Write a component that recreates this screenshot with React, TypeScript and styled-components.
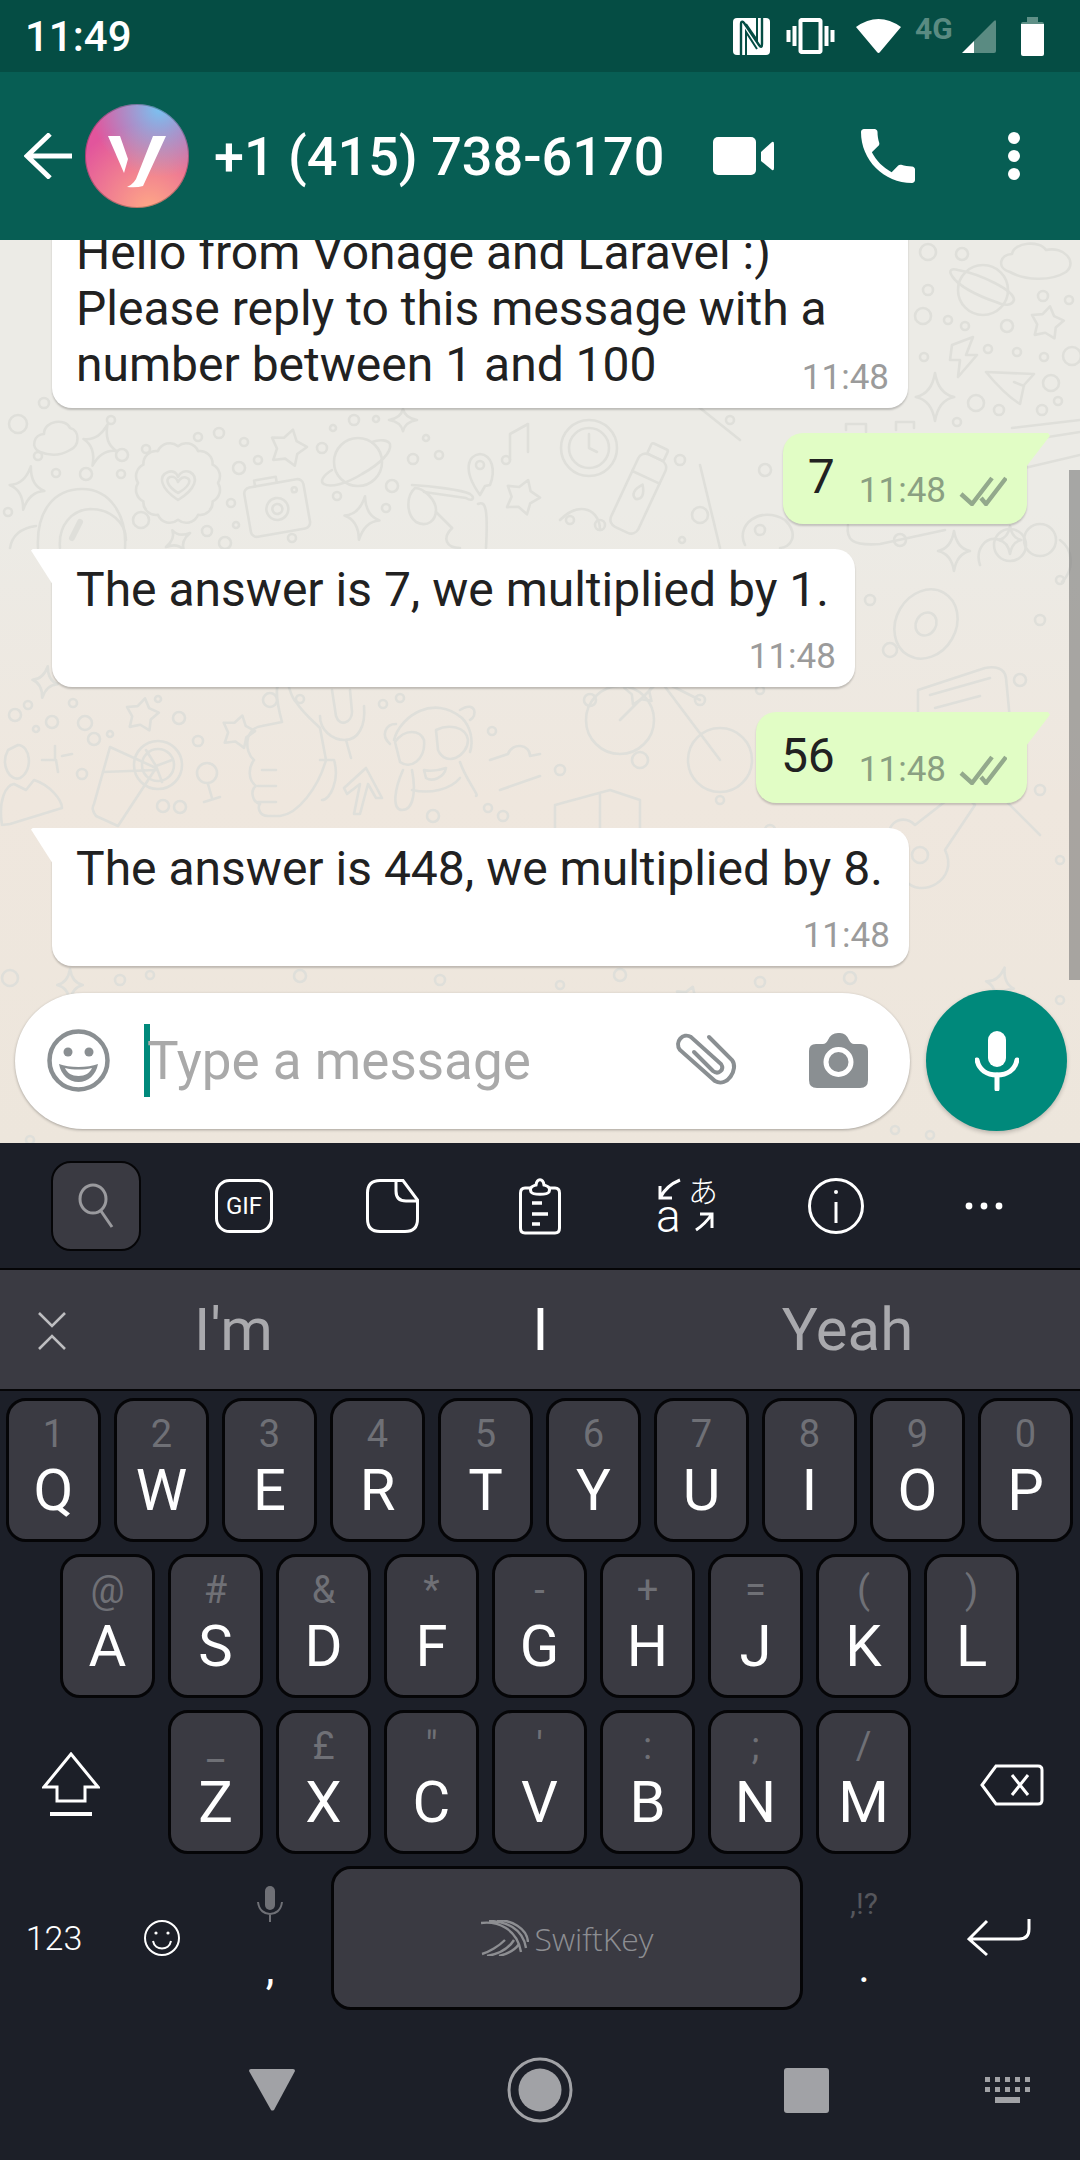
import React from 'react';
import styled, { createGlobalStyle } from 'styled-components';

const GlobalStyle = createGlobalStyle`
    html, body {
        margin: 0;
        padding: 0;
        background: #1c1f28;
    }
    * {
        box-sizing: border-box;
    }
`;

const FONT = 'Roboto, "Noto Sans", sans-serif';

const sparkle = (x, y, r, rot = 0) => {
    const k = r * 0.14;
    return {
        d: `M0 ${-r} Q${k} ${-k} ${r * 0.8} 0 Q${k} ${k} 0 ${r} Q${-k} ${k} ${-r * 0.8} 0 Q${-k} ${-k} 0 ${-r}Z`,
        t: `translate(${x} ${y}) rotate(${rot})`,
    };
};

const star = (x, y, r, rot = 0) => {
    const pts = [];
    for (let i = 0; i < 10; i++) {
        const a = (Math.PI / 5) * i - Math.PI / 2;
        const rr = i % 2 ? r * 0.58 : r;
        pts.push(`${(Math.cos(a) * rr).toFixed(1)},${(Math.sin(a) * rr).toFixed(1)}`);
    }
    return { pts: pts.join(' '), t: `translate(${x} ${y}) rotate(${rot})` };
};

const scallop = (cx, cy, R, n) => {
    let d = '';
    for (let i = 0; i <= n; i++) {
        const a = ((Math.PI * 2) / n) * i;
        const x = (cx + Math.cos(a) * R).toFixed(1);
        const y = (cy + Math.sin(a) * R * 0.92).toFixed(1);
        d += i === 0 ? `M${x} ${y}` : `A${(R * 0.32).toFixed(1)} ${(R * 0.32).toFixed(1)} 0 0 1 ${x} ${y}`;
    }
    return d + 'Z';
};

const sparkles = [
    sparkle(100, 445, 22, 20), sparkle(27, 488, 22, 10), sparkle(362, 518, 22, 8), sparkle(403, 420, 14, 90),
    sparkle(935, 397, 24, 0), sparkle(954, 551, 20, 0), sparkle(178, 540, 14, 60), sparkle(1010, 540, 14, 0),
    sparkle(45, 682, 16, 10), sparkle(1000, 985, 18, 15), sparkle(70, 985, 16, 0),
];

const stars = [
    star(288, 448, 19, 15), star(1047, 323, 17, 10), star(142, 715, 17, 10), star(238, 732, 17, 15),
    star(522, 497, 18, 20), star(640, 690, 16, -10), star(1000, 760, 17, 15), star(688, 1000, 14, 20),
];

const bubbles = [
    [18, 424, 9], [44, 403, 5], [38, 456, 4], [111, 420, 4], [122, 455, 6], [146, 449, 4], [56, 473, 4], [86, 474, 6], [121, 474, 4],
    [198, 437, 4], [219, 433, 5], [244, 442, 4], [239, 468, 6], [258, 460, 4], [322, 448, 5], [8, 512, 4], [141, 520, 8],
    [231, 503, 4], [207, 531, 5], [236, 525, 3], [225, 543, 6], [292, 538, 4], [337, 496, 4], [392, 486, 6], [386, 508, 4],
    [333, 428, 3], [354, 420, 5], [376, 419, 3], [426, 438, 3], [413, 459, 5], [439, 455, 4],
    [600, 525, 5], [570, 520, 4], [680, 460, 5], [700, 515, 8], [760, 530, 5], [682, 540, 3], [730, 420, 4], [765, 470, 6],
    [15, 715, 6], [28, 705, 4], [52, 722, 6], [36, 729, 3], [85, 723, 7], [94, 739, 6], [110, 734, 3], [73, 703, 4],
    [158, 699, 3], [179, 718, 6], [198, 741, 5], [270, 700, 7], [300, 699, 4], [383, 704, 4], [400, 698, 4], [82, 774, 5],
    [163, 806, 6], [180, 807, 6], [433, 816, 6], [488, 808, 4], [503, 816, 5], [492, 731, 4],
    [928, 252, 8], [962, 254, 6], [928, 290, 5], [1043, 296, 5], [1069, 300, 4], [923, 316, 8], [948, 320, 4], [965, 326, 4], [1007, 326, 6],
    [924, 357, 4], [988, 349, 4], [1017, 352, 4], [1044, 357, 4], [1072, 356, 9], [1051, 383, 8], [976, 403, 8], [999, 410, 5], [1042, 410, 5], [1058, 401, 4], [957, 422, 4],
    [900, 540, 6], [870, 600, 5], [890, 650, 7], [1040, 620, 5], [1060, 580, 4], [1020, 680, 6], [880, 720, 4], [900, 770, 6], [1040, 790, 5], [880, 850, 6], [1060, 860, 4],
    [10, 978, 8], [30, 1140, 4], [120, 980, 5], [150, 975, 4], [300, 976, 6], [440, 980, 5], [560, 985, 4], [620, 975, 6], [760, 982, 5], [850, 978, 6], [1060, 1000, 4], [895, 1130, 4], [930, 1135, 4],
    [640, 760, 8], [700, 700, 5], [760, 690, 4], [590, 700, 6], [560, 770, 5], [720, 800, 4], [770, 830, 5], [605, 565, 4],
];

const Doodles = () => (
    <DoodleLayer viewBox="0 240 1080 903" fill="none" stroke="#dfdfda" strokeWidth="2.6" strokeLinejoin="round" strokeLinecap="round">
        {sparkles.map((s, i) => <path key={i} d={s.d} transform={s.t} />)}
        {stars.map((s, i) => <polygon key={i} points={s.pts} transform={s.t} />)}
        {bubbles.map(([x, y, r], i) => <circle key={i} cx={x} cy={y} r={r} />)}

        {/* cloud */}
        <path d="M40 452C30 448 34 434 44 434C44 420 66 418 70 428C80 430 80 446 70 450C60 456 50 456 40 452Z" />
        <path d="M1010 272C996 268 1000 254 1012 254C1014 242 1040 240 1046 250C1064 246 1078 262 1066 272C1050 282 1024 280 1010 272Z" />
        {/* cookie with heart */}
        <path d={scallop(178, 483, 40, 12)} />
        <path d="M178 500C160 488 158 476 168 472C173 470 177 473 178 477C180 472 185 470 190 472C199 477 196 489 178 500Z" />
        <path d="M178 493C167 486 165 479 170 477C174 476 177 479 178 482C180 478 184 476 187 478C192 480 189 487 178 493Z" />
        {/* planets */}
        <circle cx="358" cy="462" r="24" />
        <path d="M332 470C322 476 320 482 324 484C330 488 346 484 362 474C380 464 392 452 390 444C388 440 380 439 372 442" />
        <circle cx="983" cy="290" r="25" />
        <path d="M952 276C948 270 952 268 958 270C980 274 1014 290 1014 300C1012 306 1004 306 996 302C978 296 958 286 952 276Z" />
        {/* camera */}
        <g transform="translate(277 507) rotate(-10)">
            <rect x="-30" y="-24" width="60" height="50" rx="6" />
            <path d="M-18 -24V-30H4V-24" />
            <circle cx="0" cy="2" r="11" />
            <circle cx="0" cy="2" r="5" />
            <circle cx="20" cy="-14" r="2.5" />
        </g>
        {/* helmet */}
        <path d="M38 548C36 510 55 489 82 489C110 489 127 515 125 548" />
        <path d="M60 548C58 525 72 510 90 509C110 509 126 522 126 540" />
        <path d="M72 538L80 522" strokeWidth="6" />
        <path d="M10 548C12 535 22 528 36 526" />
        {/* glasses */}
        <path d="M412 485C432 486 462 490 470 494C476 498 472 502 466 498L424 492" />
        <path d="M415 488C406 496 406 514 416 522C428 528 436 520 436 510C436 500 424 488 415 488Z" />
        <path d="M436 512L452 528" />
        <path d="M452 528C442 538 446 548 460 548" />
        <path d="M478 504C486 500 488 510 486 548" />
        {/* pin and note */}
        <path d="M480 495C462 470 468 455 480 454C492 455 496 470 490 485L485 486Z" />
        <circle cx="480" cy="465" r="4" />
        <path d="M510 460V434L528 424V452" />
        <circle cx="506" cy="460" r="4" />
        {/* clock */}
        <circle cx="589" cy="448" r="28" />
        <circle cx="589" cy="448" r="20" />
        <path d="M589 434V448L597 452" />
        {/* bottle */}
        <g transform="translate(640 490) rotate(25)">
            <rect x="-15" y="-36" width="30" height="80" rx="8" />
            <rect x="-9" y="-48" width="18" height="12" rx="2" />
            <path d="M-15 -14H15M0 -6C-6 2 -6 8 0 10C6 8 6 2 0 -6Z" />
        </g>
        {/* sunglasses side */}
        <path d="M560 520C580 500 600 510 600 530" />
        <path d="M745 545C735 525 760 505 785 520C800 535 790 548 780 548" />
        <path d="M690 400L740 440M700 465L720 548" />
        {/* lightning and plane */}
        <path d="M952 345L973 337L966 355L977 355L958 377L960 360L950 360Z" />
        <path d="M986 372L1034 374L1024 385L1020 404C1010 398 996 384 986 372ZM1014 382L1024 386" />
        {/* ruler */}
        <path d="M1012 428L1080 420M1016 442L1080 432M1016 470L1080 455" />
        <path d="M846 430V424H866V432M896 430V422H914V428" />
        <path d="M848 525C846 540 852 546 880 544L945 530" />
        <path d="M1000 540C985 535 975 550 980 565M1060 540C1074 550 1074 570 1062 582" />
        <circle cx="1010" cy="545" r="16" />
        <circle cx="1040" cy="540" r="16" />
        {/* donut */}
        <ellipse cx="926" cy="624" rx="30" ry="36" transform="rotate(30 926 624)" />
        <ellipse cx="926" cy="624" rx="10" ry="12" transform="rotate(30 926 624)" />
        {/* pencil, card */}
        <path d="M918 690L985 668C995 666 1005 668 1006 678L1010 720L930 740C922 740 920 735 918 725Z" />
        <path d="M930 695L990 678M935 708L980 696" />
        {/* thumb */}
        <path d="M282 722C276 700 274 684 282 680C290 678 288 694 296 702C304 714 312 720 320 728L326 760C318 788 298 814 280 816H268C258 816 258 806 260 804C252 802 250 790 256 786C248 780 248 768 254 760C244 752 244 728 262 726Z" />
        <path d="M262 770H276M258 786H276M258 802H276" />
        <path d="M320 760H334C340 780 330 800 322 800" />
        {/* mic shaped U */}
        <path d="M332 690L336 716C340 728 352 722 352 712L350 690" />
        <path d="M320 716C320 730 332 740 345 740C358 740 366 726 364 706" />
        <path d="M346 740L351 758" />
        {/* drink */}
        <path d="M110 747L156 768L118 826L96 816C92 810 92 808 94 804Z" />
        <path d="M103 772L156 770" />
        <circle cx="158" cy="765" r="24" />
        <circle cx="158" cy="765" r="16" />
        <path d="M156 766L146 750M156 766L172 760M156 766L162 782" />
        {/* wine glass */}
        <circle cx="207" cy="773" r="10" />
        <path d="M208 784L212 798M204 802L220 797" />
        {/* person */}
        <path d="M18 745C30 745 34 770 20 778C10 782 0 765 8 750Z" />
        <path d="M2 825C-2 800 6 785 14 784L26 790L34 780C50 785 62 800 62 808L10 824Z" />
        <path d="M55 746V760H42M56 760L58 772M62 756L72 754" />
        {/* arrow */}
        <path d="M344 788L366 768L382 798L376 798L368 784L360 814L354 814L360 784L347 794Z" />
        {/* monkey */}
        <path d="M394 740C400 716 434 694 462 718C470 726 474 740 470 752" />
        <path d="M390 744C380 735 386 724 396 724M470 720C478 716 476 700 460 710" />
        <path d="M395 742C405 728 420 730 424 740C426 760 410 770 400 762ZM436 730C448 724 466 726 468 740C468 756 446 768 438 750Z" />
        <path d="M424 770C432 772 440 770 446 768C444 778 432 782 426 778Z" />
        <path d="M403 770C394 790 392 810 402 810C414 810 416 790 412 770M460 762C466 780 480 796 476 796" />
        <path d="M412 790C430 794 450 790 460 778" />
        {/* bones */}
        <path d="M490 760L508 754C512 742 530 744 530 756L540 754M500 790L540 776" />
        {/* bike */}
        <circle cx="620" cy="720" r="34" />
        <circle cx="720" cy="760" r="32" />
        <path d="M620 720L660 680L720 760M660 680L700 700" />
        {/* book */}
        <path d="M555 805L610 790L640 800V840M555 805V840M600 795V835" />
        {/* guitar */}
        <path d="M895 840C880 830 900 810 915 825L960 790L975 805L945 850C960 880 920 900 905 880Z" />
        <circle cx="920" cy="855" r="8" />
        <path d="M985 780L1040 835" />
        <path d="M1025 750L1010 775L1022 775L1006 800" />
    </DoodleLayer>
);

const keyRows = [
    [['1', 'Q'], ['2', 'W'], ['3', 'E'], ['4', 'R'], ['5', 'T'], ['6', 'Y'], ['7', 'U'], ['8', 'I'], ['9', 'O'], ['0', 'P']],
    [['@', 'A'], ['#', 'S'], ['&', 'D'], ['*', 'F'], ['-', 'G'], ['+', 'H'], ['=', 'J'], ['(', 'K'], [')', 'L']],
    [['_', 'Z'], ['£', 'X'], ['"', 'C'], ["'", 'V'], [':', 'B'], [';', 'N'], ['/', 'M']],
];

const LetterKey = ({ sub, letter }) => (
    <Key>
        <KeySub>{sub}</KeySub>
        <KeyLetter>{letter}</KeyLetter>
    </Key>
);

const Checks = () => (
    <CheckIcon viewBox="0 0 48 30" fill="none" stroke="#93a98c" strokeWidth="4.4">
        <path d="M2 18L13 28L33 2" />
        <path d="M22 22L27 28L47 2" />
    </CheckIcon>
);

export default function App() {
    return (
        <Page>
            <GlobalStyle />
            <StatusBar>
                <StatusTime>11:49</StatusTime>
                <StatusIcons>
                    <NfcIcon viewBox="0 0 37 37">
                        <rect width="37" height="37" rx="4" fill="#fff" />
                        <path d="M8 37V6C8 3 10 3 11 5L26 27C28 30 29 29 29 26V0" fill="none" stroke="#054d44" strokeWidth="2.4" />
                        <path d="M13 37V14L24 31M24 0V22L13 6" fill="none" stroke="#054d44" strokeWidth="2" />
                    </NfcIcon>
                    <VibrateIcon viewBox="0 3 24 18" fill="#fff">
                        <path d="M0 15h2V9H0v6zm3 2h2V7H3v10zm19-8v6h2V9h-2zm-3 8h2V7h-2v10zM16.5 3h-9C6.67 3 6 3.67 6 4.5v15c0 .83.67 1.5 1.5 1.5h9c.83 0 1.5-.67 1.5-1.5v-15c0-.83-.67-1.5-1.5-1.5zM16 19H8V5h8v14z" />
                    </VibrateIcon>
                    <WifiIcon viewBox="0 0 47 36" fill="#fff">
                        <path d="M1 9Q23.5 -7 46 9L25 34Q23.5 36 22 34Z" />
                    </WifiIcon>
                    <NetworkLabel>4G</NetworkLabel>
                    <SignalIcon viewBox="0 0 34 34">
                        <path d="M12 22L32 2Q34 0 34 3V32Q34 34 32 34H12Z" fill="#5a8b82" />
                        <path d="M0 34L12 22V34Z" fill="#fff" />
                    </SignalIcon>
                    <BatteryIcon viewBox="0 0 23 39">
                        <path d="M6 0H17V5H21Q23 5 23 7V10H0V7Q0 5 2 5H6Z" fill="#5f9087" />
                        <path d="M0 7H23V37Q23 39 21 39H2Q0 39 0 37Z" fill="#fff" />
                    </BatteryIcon>
                </StatusIcons>
            </StatusBar>

            <AppBar>
                <BackIcon viewBox="0 0 48 46" fill="none" stroke="#fff" strokeWidth="5">
                    <path d="M48 23H4M26 1L3 23L26 45" />
                </BackIcon>
                <Avatar>
                    <svg viewBox="0 0 104 104" width="104" height="104" fill="#fff">
                        <polygon points="23,32 35,32 43,55 39,69" />
                        <path d="M68 32H81L58 82Q52 84 42 83Q50 80 53 70Z" />
                    </svg>
                </Avatar>
                <ContactName>+1 (415) 738-6170</ContactName>
                <AppBarActions>
                    <VideoIcon viewBox="0 0 61 38" fill="#fff">
                        <rect width="43" height="38" rx="5" />
                        <path d="M48 15L59 5Q61 4 61 7V31Q61 34 59 33L48 24Z" />
                    </VideoIcon>
                    <CallIcon viewBox="3 3 18 18" fill="#fff">
                        <path d="M6.62 10.79c1.44 2.83 3.76 5.14 6.59 6.59l2.2-2.2c.27-.27.67-.36 1.02-.24 1.12.37 2.33.57 3.57.57.55 0 1 .45 1 1V20c0 .55-.45 1-1 1-9.39 0-17-7.61-17-17 0-.55.45-1 1-1h3.5c.55 0 1 .45 1 1 0 1.25.2 2.45.57 3.57.11.35.03.74-.25 1.02l-2.2 2.2z" />
                    </CallIcon>
                    <MoreIcon viewBox="0 0 12 48" fill="#fff">
                        <circle cx="6" cy="6" r="6" />
                        <circle cx="6" cy="24" r="6" />
                        <circle cx="6" cy="42" r="6" />
                    </MoreIcon>
                </AppBarActions>
            </AppBar>

            <Chat>
                <Doodles />
                <MessageList>
                    <IncomingBubble $minWidth={856}>
                        <MessageText>
                            Hello from Vonage and Laravel :)
                            <br />
                            Please reply to this message with a
                            <br />
                            number between 1 and 100
                        </MessageText>
                        <IncomingTime $overlap>11:48</IncomingTime>
                    </IncomingBubble>
                    <OutgoingBubble>
                        <MessageText>7</MessageText>
                        <OutgoingMeta>
                            <OutgoingTime>11:48</OutgoingTime>
                            <Checks />
                        </OutgoingMeta>
                    </OutgoingBubble>
                    <IncomingBubble $tail>
                        <MessageText>The answer is 7, we multiplied by 1.</MessageText>
                        <IncomingTime>11:48</IncomingTime>
                    </IncomingBubble>
                    <OutgoingBubble>
                        <MessageText>56</MessageText>
                        <OutgoingMeta>
                            <OutgoingTime>11:48</OutgoingTime>
                            <Checks />
                        </OutgoingMeta>
                    </OutgoingBubble>
                    <IncomingBubble $tail>
                        <MessageText>The answer is 448, we multiplied by 8.</MessageText>
                        <IncomingTime>11:48</IncomingTime>
                    </IncomingBubble>
                </MessageList>

                <InputRow>
                    <InputPill>
                        <EmojiIcon viewBox="0 0 63 63">
                            <circle cx="31.5" cy="31.5" r="29" fill="none" stroke="#8a8f92" strokeWidth="4.5" />
                            <circle cx="21" cy="23" r="4.5" fill="#8a8f92" />
                            <circle cx="42" cy="23" r="4.5" fill="#8a8f92" />
                            <path d="M12 35C22 39 41 39 51 35C49 46 41 53 31.5 53C22 53 14 46 12 35Z" fill="#8a8f92" />
                            <path d="M18 39C26 41 37 41 45 39C43 44 38 47 31.5 47C25 47 20 44 18 39Z" fill="#fff" />
                        </EmojiIcon>
                        <Caret />
                        <Placeholder>Type a message</Placeholder>
                        <ClipIcon viewBox="0 0 62 55" fill="none" stroke="#8a8f92" strokeWidth="4" strokeLinecap="round">
                            <path d="M34 4L57 27C64 36 52 55 40 48L5 17C-1 9 8 -1 16 4L46 31C50 37 43 42 38 38L19 19" />
                        </ClipIcon>
                        <CameraIcon viewBox="0 0 59 55">
                            <path d="M7 11H14Q17 11 19 7Q22 0 29 0H31Q37 0 40 7Q42 11 45 11H52Q59 11 59 18V47Q59 55 51 55H8Q0 55 0 47V18Q0 11 7 11Z" fill="#8a8f92" />
                            <circle cx="29.5" cy="29" r="12.5" fill="none" stroke="#fff" strokeWidth="5" />
                        </CameraIcon>
                    </InputPill>
                    <MicButton>
                        <svg viewBox="0 0 44 60" width="44" height="60" fill="none" stroke="#fff">
                            <rect x="13" y="0" width="18" height="36" rx="9" fill="#fff" stroke="none" />
                            <path d="M2 29C4 39 12 44 22 44C32 44 40 39 42 29" strokeWidth="5" strokeLinecap="round" />
                            <path d="M22 44V58" strokeWidth="5" strokeLinecap="round" />
                        </svg>
                    </MicButton>
                </InputRow>
                <ScrollThumb />
            </Chat>

            <Keyboard>
                <Toolbar>
                    <ToolCell>
                        <SearchBox>
                            <svg viewBox="0 0 36 46" width="36" height="46" fill="none" stroke="#9a9a9e" strokeWidth="3">
                                <ellipse cx="15" cy="16" rx="13" ry="14" />
                                <path d="M23 28L34 44" />
                            </svg>
                        </SearchBox>
                    </ToolCell>
                    <ToolCell>
                        <svg viewBox="0 0 58 54" width="58" height="54" fill="none" stroke="#fff" strokeWidth="3">
                            <rect x="1.5" y="1.5" width="55" height="51" rx="13" />
                            <GifText x="29" y="35" textAnchor="middle">GIF</GifText>
                        </svg>
                    </ToolCell>
                    <ToolCell>
                        <svg viewBox="0 0 53 54" width="53" height="54" fill="none" stroke="#fff" strokeWidth="3">
                            <path d="M30 1.5H14Q1.5 1.5 1.5 14V40Q1.5 52.5 14 52.5H39Q51.5 52.5 51.5 40V21L37 1.5Z" />
                            <path d="M30 1.5V12Q30 22 40 22H51.5" />
                        </svg>
                    </ToolCell>
                    <ToolCell>
                        <svg viewBox="0 0 42 58" width="42" height="58" fill="none" stroke="#fff" strokeWidth="3">
                            <path d="M11 11H6Q1.5 11 1.5 16V51Q1.5 56 6 56H36Q40.5 56 40.5 51V16Q40.5 11 36 11H31" />
                            <path d="M12 15C10 10 14 9 17 8C18 1 24 1 25 8C28 9 32 10 30 15C28 18 14 18 12 15Z" />
                            <path d="M13 26H23M13 37H29M13 47H21" strokeWidth="3.4" />
                        </svg>
                    </ToolCell>
                    <ToolCell>
                        <TranslateGlyph viewBox="0 0 64 60" fill="none" stroke="#fff" strokeWidth="3">
                            <path d="M24 4C14 8 8 14 4 22M4 10V22H16" />
                            <path d="M40 54C46 50 52 44 56 38M44 38H56V52" />
                            <TranslateKana x="32" y="26">あ</TranslateKana>
                            <TranslateLatin x="0" y="56">a</TranslateLatin>
                        </TranslateGlyph>
                    </ToolCell>
                    <ToolCell>
                        <svg viewBox="0 0 56 58" width="56" height="58" fill="none" stroke="#fff" strokeWidth="3">
                            <circle cx="28" cy="29" r="26.5" />
                            <path d="M28 25V46" />
                            <circle cx="28" cy="15" r="2" fill="#fff" stroke="none" />
                        </svg>
                    </ToolCell>
                    <ToolCell>
                        <svg viewBox="0 0 38 8" width="38" height="8" fill="#fff">
                            <circle cx="4" cy="4" r="3.4" />
                            <circle cx="19" cy="4" r="3.4" />
                            <circle cx="34" cy="4" r="3.4" />
                        </svg>
                    </ToolCell>
                </Toolbar>

                <SuggestionBar>
                    <CollapseIcon viewBox="0 0 28 38" fill="none" stroke="#bdbdc0" strokeWidth="2.6">
                        <path d="M1 1L14 14L27 1M1 37L14 24L27 37" />
                    </CollapseIcon>
                    <Suggestion>I'm</Suggestion>
                    <Suggestion $primary>I</Suggestion>
                    <Suggestion>Yeah</Suggestion>
                </SuggestionBar>

                <Keys>
                    <KeyRow>
                        {keyRows[0].map(([sub, letter]) => <LetterKey key={letter} sub={sub} letter={letter} />)}
                    </KeyRow>
                    <KeyRow $offset={60}>
                        {keyRows[1].map(([sub, letter]) => <LetterKey key={letter} sub={sub} letter={letter} />)}
                    </KeyRow>
                    <KeyRow>
                        <ShiftCell>
                            <svg viewBox="0 0 58 64" width="58" height="64" fill="none" stroke="#fff" strokeWidth="3">
                                <path d="M29 2L56 35H43V49H15V35H2Z" />
                                <path d="M8 62H50" strokeWidth="4" />
                            </svg>
                        </ShiftCell>
                        {keyRows[2].map(([sub, letter]) => <LetterKey key={letter} sub={sub} letter={letter} />)}
                        <BackspaceCell>
                            <svg viewBox="0 0 64 42" width="64" height="42" fill="none" stroke="#fff" strokeWidth="3">
                                <path d="M16 2H58Q62 2 62 6V36Q62 40 58 40H16L2 21Z" />
                                <path d="M32 11L48 31M48 11L32 31" />
                            </svg>
                        </BackspaceCell>
                    </KeyRow>
                    <BottomRow>
                        <PlainCell>
                            <NumbersLabel>123</NumbersLabel>
                        </PlainCell>
                        <PlainCell>
                            <svg viewBox="0 0 36 36" width="36" height="36" fill="none" stroke="#fff" strokeWidth="2">
                                <circle cx="18" cy="18" r="17" />
                                <circle cx="12" cy="13" r="1.6" fill="#fff" stroke="none" />
                                <circle cx="24" cy="13" r="1.6" fill="#fff" stroke="none" />
                                <path d="M9 21C11 31 25 31 27 21" />
                            </svg>
                        </PlainCell>
                        <PunctuationCell>
                            <svg viewBox="0 0 26 36" width="26" height="36" fill="none" stroke="#6f7076" strokeWidth="2">
                                <rect x="8" y="0" width="10" height="24" rx="5" fill="#6f7076" stroke="none" />
                                <path d="M1 16C2 25 8 28 13 28C18 28 24 25 25 16M13 28V36" />
                            </svg>
                            <PunctuationMark>,</PunctuationMark>
                        </PunctuationCell>
                        <SpaceBar>
                            <svg viewBox="0 0 48 36" width="48" height="36" fill="none" stroke="#8d8e92" strokeWidth="2.4">
                                <path d="M0 3C16 1 36 8 40 32M8 1C24 1 42 8 45 28M16 0C30 0 46 8 47 22M1 34C8 32 18 26 24 20M6 36C18 34 28 28 33 20M18 36C26 34 34 30 38 24" />
                            </svg>
                            <SwiftKeyLabel>SwiftKey</SwiftKeyLabel>
                        </SpaceBar>
                        <PunctuationCell>
                            <PunctuationHint>,!?</PunctuationHint>
                            <PunctuationMark $period>.</PunctuationMark>
                        </PunctuationCell>
                        <EnterCell>
                            <svg viewBox="0 0 64 38" width="64" height="38" fill="none" stroke="#fff" strokeWidth="3">
                                <path d="M62 0V10Q62 20 52 20H4M20 2L2 20L20 36" />
                            </svg>
                        </EnterCell>
                    </BottomRow>
                </Keys>

                <NavBar>
                    <NavCell>
                        <svg viewBox="0 0 48 42" width="48" height="42" fill="#a1a2a6">
                            <path d="M1 2Q1 0 3 0H45Q47 0 47 2L26 41Q24 42 23 41Z" />
                        </svg>
                    </NavCell>
                    <NavCell>
                        <svg viewBox="0 0 66 66" width="66" height="66">
                            <circle cx="33" cy="33" r="31" fill="none" stroke="#a1a2a6" strokeWidth="3" />
                            <circle cx="33" cy="33" r="21.5" fill="#a1a2a6" />
                        </svg>
                    </NavCell>
                    <NavCell>
                        <NavSquare />
                    </NavCell>
                    <NavCell>
                        <svg viewBox="0 0 45 26" width="45" height="26" fill="#a1a2a6">
                            {[0, 10, 20, 30, 40].map((x) => (
                                <React.Fragment key={x}>
                                    <rect x={x} y="0" width="5" height="5" />
                                    <rect x={x} y="10" width="5" height="5" />
                                </React.Fragment>
                            ))}
                            <rect x="10" y="20" width="25" height="6" />
                        </svg>
                    </NavCell>
                </NavBar>
            </Keyboard>
        </Page>
    );
}

const Page = styled.div`
    width: 1080px;
    height: 2160px;
    display: flex;
    flex-direction: column;
    overflow: hidden;
    font-family: ${FONT};
`;

const StatusBar = styled.div`
    height: 72px;
    flex: none;
    background: #054d44;
    display: flex;
    align-items: center;
    justify-content: space-between;
    padding: 0 36px 0 25px;
`;

const StatusTime = styled.div`
    color: #fff;
    font-size: 42px;
    font-weight: 500;
`;

const StatusIcons = styled.div`
    display: flex;
    align-items: center;
`;

const NfcIcon = styled.svg`
    width: 37px;
    height: 37px;
`;

const VibrateIcon = styled.svg`
    width: 49px;
    height: 36px;
    margin-left: 16px;
`;

const WifiIcon = styled.svg`
    width: 47px;
    height: 36px;
    margin-left: 20px;
`;

const NetworkLabel = styled.div`
    width: 42px;
    margin: 0 0 14px 13px;
    color: #5a8b82;
    font-size: 30px;
    font-weight: 700;
    line-height: 22px;
`;

const SignalIcon = styled.svg`
    width: 34px;
    height: 34px;
    margin-left: 5px;
`;

const BatteryIcon = styled.svg`
    width: 23px;
    height: 39px;
    margin-left: 25px;
`;

const AppBar = styled.div`
    height: 168px;
    flex: none;
    background: #075e54;
    display: flex;
    align-items: center;
    padding: 0 60px 0 24px;
    position: relative;
    z-index: 2;
`;

const BackIcon = styled.svg`
    width: 48px;
    height: 46px;
`;

const Avatar = styled.div`
    width: 104px;
    height: 104px;
    margin-left: 13px;
    flex: none;
    border-radius: 50%;
    box-shadow: inset 0 0 0 1px rgba(0, 0, 0, 0.25);
    background:
        radial-gradient(circle at 72% 4%, #78c3f2 0, rgba(120, 195, 242, 0) 55%),
        radial-gradient(circle at 62% 102%, #ffa986 0, rgba(255, 169, 134, 0) 70%),
        #e2559c;
`;

const ContactName = styled.div`
    margin-left: 25px;
    color: #fff;
    font-size: 54px;
    font-weight: 500;
    white-space: nowrap;
`;

const AppBarActions = styled.div`
    margin-left: auto;
    display: flex;
    align-items: center;
`;

const VideoIcon = styled.svg`
    width: 61px;
    height: 38px;
`;

const CallIcon = styled.svg`
    width: 54px;
    height: 54px;
    margin-left: 87px;
`;

const MoreIcon = styled.svg`
    width: 12px;
    height: 48px;
    margin-left: 93px;
`;

const Chat = styled.div`
    flex: 1;
    min-height: 0;
    position: relative;
    overflow: hidden;
    display: flex;
    flex-direction: column;
    background: linear-gradient(#ecebe6, #ecebe6 30%, #efe7de 62%, #ede6dc);
`;

const DoodleLayer = styled.svg`
    position: absolute;
    top: 0;
    left: 0;
    width: 1080px;
    height: 903px;
`;

const MessageList = styled.div`
    position: relative;
    flex: 1;
    min-height: 0;
    display: flex;
    flex-direction: column;
    justify-content: flex-end;
    gap: 25px;
    padding-bottom: 24px;
`;

const IncomingBubble = styled.div`
    position: relative;
    align-self: flex-start;
    flex: none;
    min-width: ${(p) => p.$minWidth || 0}px;
    margin-left: 52px;
    padding: 13px 26px 13px 24px;
    display: flex;
    flex-direction: column;
    background: #fff;
    border-radius: ${(p) => (p.$tail ? '0 20px 20px 20px' : '20px')};
    box-shadow: 0 2px 2px rgba(0, 0, 0, 0.2);

    ${(p) =>
        p.$tail &&
        `&::before {
            content: '';
            position: absolute;
            top: 0;
            left: -21px;
            width: 22px;
            height: 36px;
            background: #fff;
            clip-path: polygon(8% 0, 100% 0, 100% 100%, 0 4%);
        }`}
`;

const OutgoingBubble = styled.div`
    position: relative;
    align-self: flex-end;
    flex: none;
    margin-right: 53px;
    min-height: 91px;
    padding: 16px 20px 16px 25px;
    display: flex;
    gap: 24px;
    background: #e1fdc5;
    border-radius: 20px 0 20px 20px;
    box-shadow: 0 2px 2px rgba(0, 0, 0, 0.18);

    &::after {
        content: '';
        position: absolute;
        top: 0;
        right: -23px;
        width: 24px;
        height: 34px;
        background: #e1fdc5;
        clip-path: polygon(0 0, 92% 0, 100% 8%, 0 100%);
    }
`;

const MessageText = styled.div`
    color: #212121;
    font-size: 48px;
    line-height: 56px;
    white-space: nowrap;
`;

const IncomingTime = styled.div`
    align-self: flex-end;
    margin: ${(p) => (p.$overlap ? '-32px' : '22px')} -7px 0 0;
    color: #9b9b9b;
    font-size: 35px;
    line-height: 34px;
`;

const OutgoingMeta = styled.div`
    align-self: flex-end;
    display: flex;
    align-items: center;
    gap: 13px;
`;

const OutgoingTime = styled.div`
    color: #8aa082;
    font-size: 35px;
    line-height: 34px;
`;

const CheckIcon = styled.svg`
    width: 48px;
    height: 30px;
`;

const InputRow = styled.div`
    position: relative;
    flex: none;
    display: flex;
    align-items: center;
    gap: 16px;
    padding: 0 13px 12px 15px;
`;

const InputPill = styled.div`
    width: 895px;
    height: 136px;
    display: flex;
    align-items: center;
    padding-left: 32px;
    background: #fff;
    border-radius: 68px;
    box-shadow: 0 1px 3px rgba(0, 0, 0, 0.3);
`;

const EmojiIcon = styled.svg`
    width: 63px;
    height: 63px;
    flex: none;
`;

const Caret = styled.div`
    width: 6px;
    height: 73px;
    margin-left: 34px;
    flex: none;
    background: #00897b;
`;

const Placeholder = styled.div`
    width: 525px;
    margin-left: -3px;
    margin-right: 3px;
    flex: none;
    color: #a9a9a9;
    font-size: 53px;
    white-space: nowrap;
`;

const ClipIcon = styled.svg`
    width: 62px;
    height: 55px;
    flex: none;
`;

const CameraIcon = styled.svg`
    width: 59px;
    height: 55px;
    margin-left: 72px;
    flex: none;
`;

const MicButton = styled.div`
    width: 141px;
    height: 141px;
    flex: none;
    display: flex;
    align-items: center;
    justify-content: center;
    border-radius: 50%;
    background: #00897b;
    box-shadow: 0 2px 4px rgba(0, 0, 0, 0.22);
`;

const ScrollThumb = styled.div`
    position: absolute;
    top: 230px;
    right: 0;
    width: 11px;
    height: 510px;
    background: rgba(110, 110, 110, 0.55);
`;

const Keyboard = styled.div`
    flex: none;
    height: 1017px;
    background: #1c1f28;
    display: flex;
    flex-direction: column;
`;

const Toolbar = styled.div`
    height: 125px;
    flex: none;
    padding: 0 22px;
    display: grid;
    grid-template-columns: repeat(7, 1fr);
    align-items: center;
    border-bottom: 2px solid #050507;
    box-sizing: content-box;
`;

const ToolCell = styled.div`
    display: flex;
    justify-content: center;
    align-items: center;
`;

const SearchBox = styled.div`
    width: 90px;
    height: 90px;
    display: flex;
    align-items: center;
    justify-content: center;
    background: #3a3a42;
    border: 2px solid #050507;
    border-radius: 20px;
`;

const GifText = styled.text`
    fill: #fff;
    stroke: none;
    font-family: ${FONT};
    font-size: 24px;
`;

const TranslateGlyph = styled.svg`
    width: 64px;
    height: 60px;
`;

const TranslateKana = styled.text`
    fill: #fff;
    stroke: none;
    font-family: "Noto Sans CJK JP", sans-serif;
    font-size: 30px;
    font-weight: 300;
`;

const TranslateLatin = styled.text`
    fill: #fff;
    stroke: none;
    font-family: ${FONT};
    font-size: 46px;
    font-weight: 300;
`;

const SuggestionBar = styled.div`
    height: 121px;
    flex: none;
    position: relative;
    padding-left: 80px;
    display: grid;
    grid-template-columns: repeat(3, 307px);
    align-items: center;
    background: #3a3a42;
    border-bottom: 2px solid #050507;
`;

const CollapseIcon = styled.svg`
    position: absolute;
    left: 38px;
    top: 42px;
    width: 28px;
    height: 38px;
`;

const Suggestion = styled.div`
    text-align: center;
    color: ${(p) => (p.$primary ? '#fff' : '#a9a9ad')};
    font-size: 60px;
`;

const Keys = styled.div`
    flex: none;
    padding-top: 7px;
    display: flex;
    flex-direction: column;
    gap: 12px;
`;

const KeyRow = styled.div`
    height: 144px;
    display: flex;
    gap: 13px;
    padding-left: ${(p) => p.$offset || 6}px;
`;

const Key = styled.div`
    width: 95px;
    height: 144px;
    flex: none;
    padding-top: 13px;
    display: flex;
    flex-direction: column;
    align-items: center;
    background: #3a3a42;
    border: 3px solid #050507;
    border-radius: 20px;
`;

const KeySub = styled.div`
    height: 40px;
    color: #6f7076;
    font-size: 38px;
    line-height: 40px;
`;

const KeyLetter = styled.div`
    margin-top: 7px;
    color: #fff;
    font-size: 58px;
    line-height: 58px;
`;

const ShiftCell = styled.div`
    width: 141px;
    margin-left: -6px;
    margin-right: 14px;
    flex: none;
    display: flex;
    align-items: center;
    justify-content: center;
    padding-top: 4px;
`;

const BackspaceCell = styled.div`
    flex: 1;
    display: flex;
    align-items: center;
    justify-content: flex-end;
    padding: 0 36px 0 0;
    margin-top: 6px;
`;

const BottomRow = styled.div`
    height: 144px;
    display: flex;
`;

const PlainCell = styled.div`
    width: 108px;
    flex: none;
    display: flex;
    align-items: center;
    justify-content: center;
`;

const NumbersLabel = styled.div`
    color: #fff;
    font-size: 34px;
    font-weight: 300;
`;

const PunctuationCell = styled.div`
    width: 108px;
    flex: none;
    display: flex;
    flex-direction: column;
    align-items: center;
    padding-top: 20px;
`;

const PunctuationMark = styled.div`
    margin-top: ${(p) => (p.$period ? '20px' : '22px')};
    color: #fff;
    font-size: 44px;
    line-height: 50px;
`;

const PunctuationHint = styled.div`
    height: 36px;
    color: #55565c;
    font-size: 30px;
    line-height: 36px;
`;

const SpaceBar = styled.div`
    width: 472px;
    margin: 0 7px;
    flex: none;
    display: flex;
    align-items: center;
    justify-content: center;
    gap: 6px;
    background: #3a3a42;
    border: 3px solid #050507;
    border-radius: 20px;
`;

const SwiftKeyLabel = styled.div`
    color: #8d8e92;
    font-family: "Open Sans", sans-serif;
    font-size: 32px;
    font-weight: 300;
`;

const EnterCell = styled.div`
    flex: 1;
    display: flex;
    align-items: center;
    justify-content: center;
`;

const NavBar = styled.div`
    flex: none;
    height: 150px;
    padding-top: 10px;
    padding-left: 137px;
    display: grid;
    grid-template-columns: 270px 266px 266px 136px;
    align-items: center;
`;

const NavCell = styled.div`
    display: flex;
    justify-content: center;
    align-items: center;
`;

const NavSquare = styled.div`
    width: 45px;
    height: 45px;
    background: #a1a2a6;
    border-radius: 3px;
`;
